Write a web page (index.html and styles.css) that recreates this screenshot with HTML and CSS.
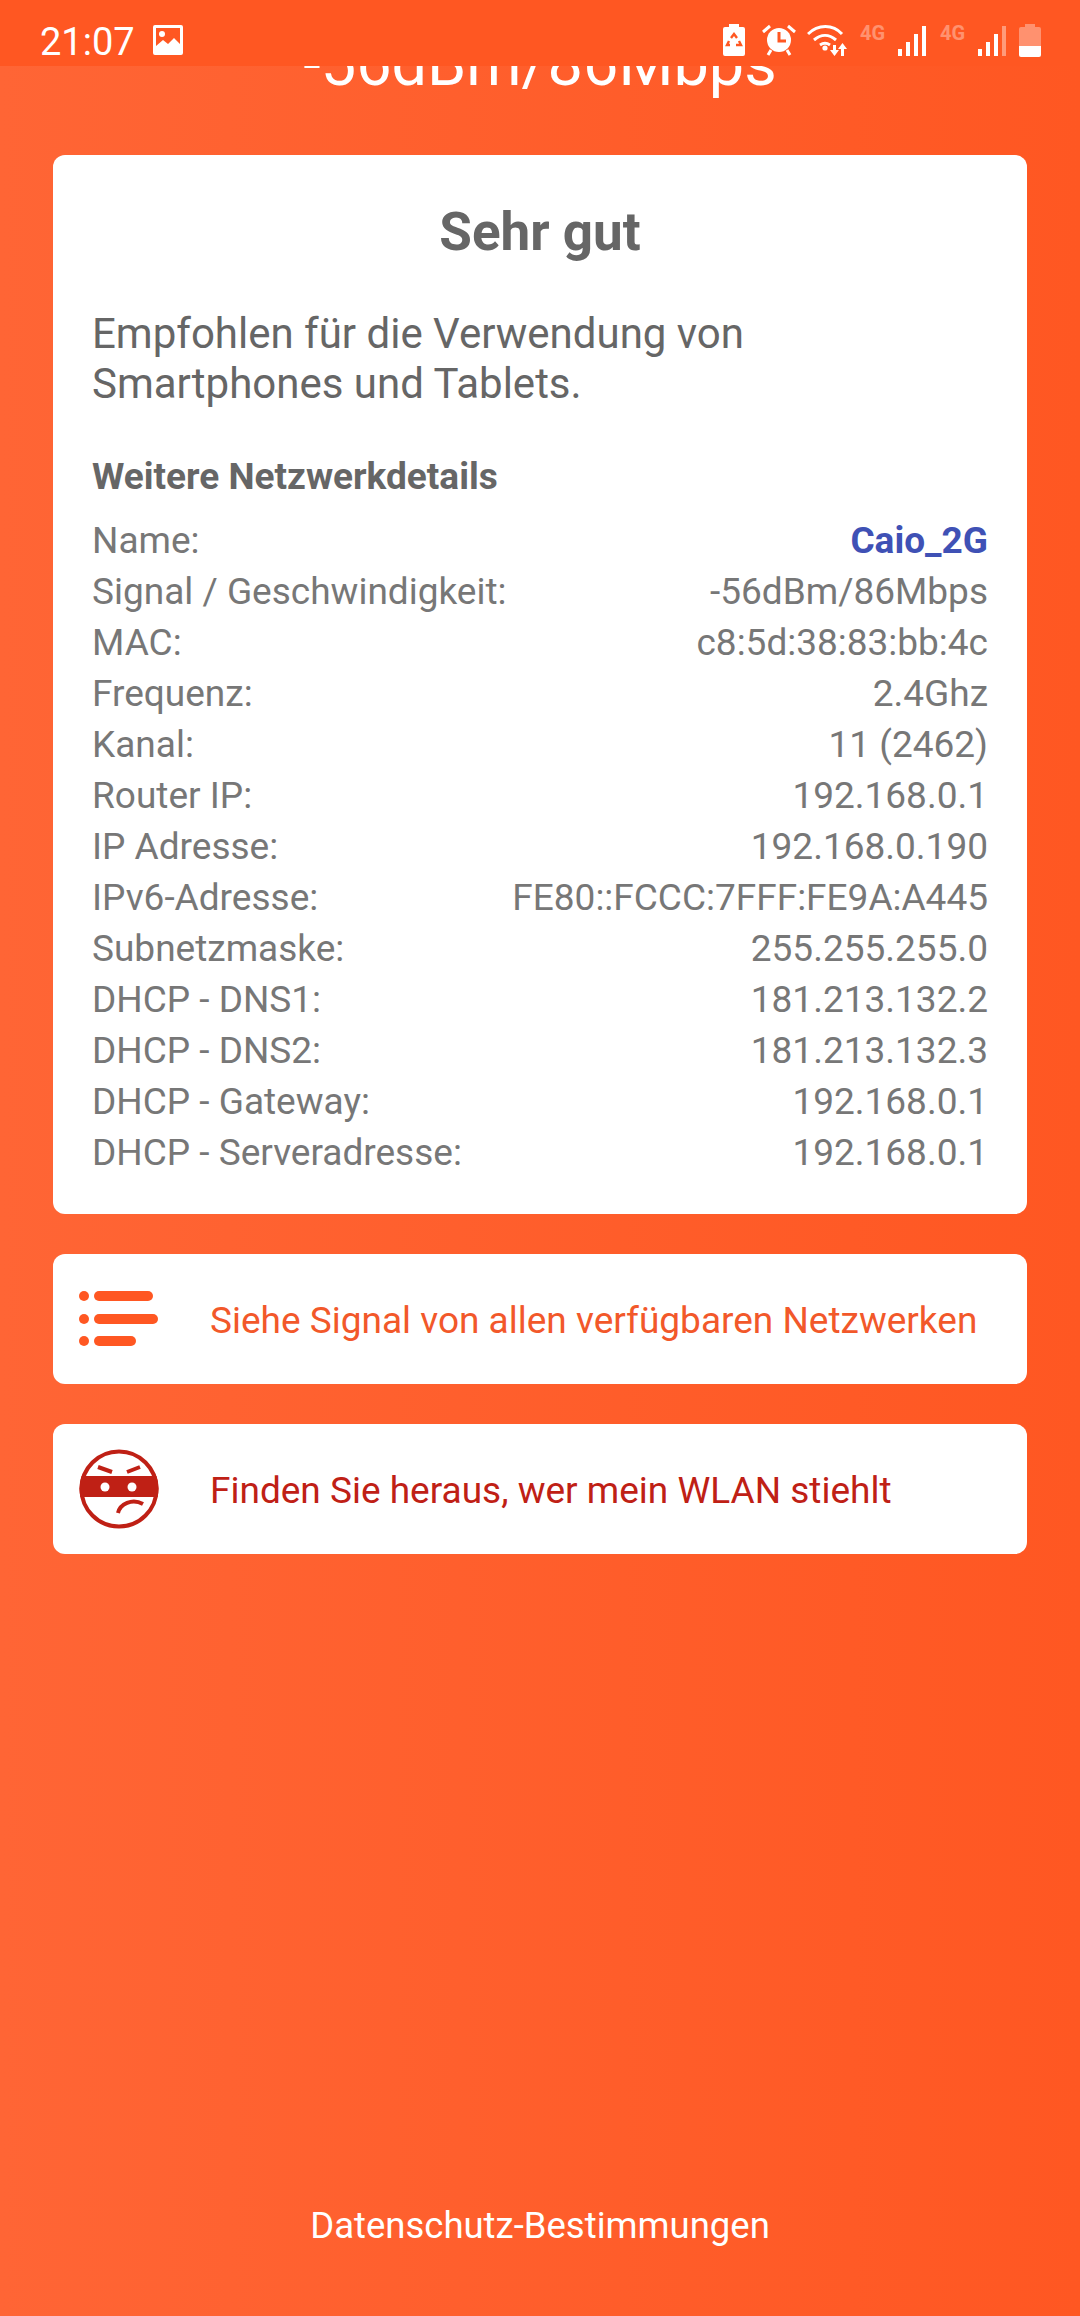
FILE: index.html
```html
<!DOCTYPE html>
<html>
<head>
<meta charset="utf-8">
<link rel="stylesheet" href="styles.css">
</head>
<body>
<div class="status">
	<div class="status-left">
		<span class="time">21:07</span>
		<svg width="32" height="32" viewBox="0 0 32 32">
			<path fill="#fff" fill-rule="evenodd" d="M3 1h26a2 2 0 0 1 2 2v26a2 2 0 0 1-2 2H3a2 2 0 0 1-2-2V3a2 2 0 0 1 2-2zM4 4v18l7-6 5 4 6-6 6 6V4z"/>
			<circle cx="10" cy="10" r="3" fill="#fff"/>
		</svg>
	</div>
	<div class="status-right">
		<svg width="24" height="32" viewBox="0 0 24 32">
			<path fill="#fff" d="M7 0h10v3h4a2 2 0 0 1 2 2v25a2 2 0 0 1-2 2H3a2 2 0 0 1-2-2V5a2 2 0 0 1 2-2h4z"/>
			<path fill="none" stroke="#ff5722" stroke-width="2.4" d="M9 14l3-4 3 4M17 17l2 4h-5M8 21H5l2-4"/>
		</svg>
		<svg class="alarm" width="34" height="32" viewBox="0 0 34 32">
			<circle cx="17" cy="16" r="12" fill="#fff"/>
			<path fill="none" stroke="#ff5722" stroke-width="3" d="M17 8v9h7"/>
			<path fill="none" stroke="#fff" stroke-width="3" d="M1 8l7-6M33 8l-7-6M9 26l-3 5M25 26l3 5"/>
		</svg>
		<svg class="wifi" width="42" height="32" viewBox="0 0 42 32">
			<path fill="none" stroke="#fff" stroke-width="3" d="M1 10c10-10 25-10 34 0M7 16c7-6 15-6 22 0M13 21c3-2 7-2 10 0"/>
			<circle cx="18" cy="24" r="2.6" fill="#fff"/>
			<path fill="#fff" d="M26 21h3v5h3l-4.500 6-4.500-6h3zM37 32h-3v-7h-3l4.500-6 4.500 6h-3z"/>
		</svg>
		<span class="net">4G</span>
		<svg class="bars" width="28" height="30" viewBox="0 0 28 30">
			<rect x="0" y="23" width="4" height="7" fill="#fff"/>
			<rect x="8" y="16" width="4" height="14" fill="#fff"/>
			<rect x="16" y="8" width="4" height="22" fill="#fff"/>
			<rect x="24" y="0" width="4" height="30" fill="#fff"/>
		</svg>
		<span class="net">4G</span>
		<svg class="bars" width="28" height="30" viewBox="0 0 28 30">
			<rect x="0" y="23" width="4" height="7" fill="#fff"/>
			<rect x="8" y="16" width="4" height="14" fill="#fff"/>
			<rect x="16" y="8" width="4" height="22" fill="#fff"/>
			<rect x="24" y="0" width="4" height="30" fill="#fff" fill-opacity="0.4"/>
		</svg>
		<svg class="batt" width="22" height="33" viewBox="0 0 22 33">
			<path fill="#fff" fill-opacity="0.35" d="M6 0h10v3h4a2 2 0 0 1 2 2v18H0V5a2 2 0 0 1 2-2h4z"/>
			<path fill="#fff" d="M0 22h22v9a2 2 0 0 1-2 2H2a2 2 0 0 1-2-2z"/>
		</svg>
	</div>
</div>

<div class="page">
	<div class="speed">-56dBm/86Mbps</div>

	<div class="card info">
		<h1>Sehr gut</h1>
		<p class="desc">Empfohlen für die Verwendung von Smartphones und Tablets.</p>
		<h2>Weitere Netzwerkdetails</h2>
		<div class="rows">
			<div class="row"><span>Name:</span><b>Caio_2G</b></div>
			<div class="row"><span>Signal / Geschwindigkeit:</span><span>-56dBm/86Mbps</span></div>
			<div class="row"><span>MAC:</span><span>c8:5d:38:83:bb:4c</span></div>
			<div class="row"><span>Frequenz:</span><span>2.4Ghz</span></div>
			<div class="row"><span>Kanal:</span><span>11 (2462)</span></div>
			<div class="row"><span>Router IP:</span><span>192.168.0.1</span></div>
			<div class="row"><span>IP Adresse:</span><span>192.168.0.190</span></div>
			<div class="row"><span>IPv6-Adresse:</span><span>FE80::FCCC:7FFF:FE9A:A445</span></div>
			<div class="row"><span>Subnetzmaske:</span><span>255.255.255.0</span></div>
			<div class="row"><span>DHCP - DNS1:</span><span>181.213.132.2</span></div>
			<div class="row"><span>DHCP - DNS2:</span><span>181.213.132.3</span></div>
			<div class="row"><span>DHCP - Gateway:</span><span>192.168.0.1</span></div>
			<div class="row"><span>DHCP - Serveradresse:</span><span>192.168.0.1</span></div>
		</div>
	</div>

	<div class="card action orange">
		<svg width="80" height="56" viewBox="0 0 80 56">
			<circle cx="5" cy="5" r="5" fill="#ff5722"/>
			<circle cx="5" cy="28" r="5" fill="#ff5722"/>
			<circle cx="5" cy="50" r="5" fill="#ff5722"/>
			<rect x="15" y="0" width="59" height="10" rx="5" fill="#ff5722"/>
			<rect x="15" y="23" width="64" height="10" rx="5" fill="#ff5722"/>
			<rect x="15" y="45" width="42" height="10" rx="5" fill="#ff5722"/>
		</svg>
		<span>Siehe Signal von allen verfügbaren Netzwerken</span>
	</div>

	<div class="card action red">
		<svg width="80" height="80" viewBox="0 0 80 80">
			<circle cx="40" cy="40" r="37.500" fill="#fff" stroke="#bf2015" stroke-width="4"/>
			<path fill="#bf2015" d="M2.500 27H77.500A39.500 39.500 0 0 1 78.600 48H1.400A39.500 39.500 0 0 1 2.500 27z"/>
			<circle cx="26" cy="38" r="4.500" fill="#fff"/>
			<circle cx="53" cy="38" r="4.500" fill="#fff"/>
			<path fill="none" stroke="#bf2015" stroke-width="4" d="M19 18l14 5M61 18l-13 5M39 64c2-9 14-15 25-9"/>
		</svg>
		<span>Finden Sie heraus, wer mein WLAN stiehlt</span>
	</div>

	<div class="spacer"></div>
	<div class="privacy">Datenschutz-Bestimmungen</div>
</div>
</body>
</html>
```
FILE: styles.css
```css
html, body
{
	margin: 0;
	height: 100%;
}
body
{
	width: 1080px;
	height: 2316px;
	overflow: hidden;
	position: relative;
	font-family: Roboto, sans-serif;
	background: linear-gradient(90deg, #ff6535, #ff5722);
}
.status
{
	position: absolute;
	z-index: 2;
	top: 0;
	left: 0;
	width: 1080px;
	height: 66px;
	box-sizing: border-box;
	padding: 22px 39px 0 40px;
	background: #ff5722;
	display: flex;
	justify-content: space-between;
	align-items: flex-start;
	color: #fff;
}
.status svg
{
	display: block;
}
.status-left
{
	display: flex;
	align-items: flex-start;
	gap: 17px;
}
.status-left svg
{
	margin-top: 2px;
}
.time
{
	font-size: 38px;
	line-height: 40px;
}
.status-right
{
	display: flex;
	align-items: flex-start;
	padding-top: 2px;
}
.alarm
{
	margin-left: 16px;
}
.wifi
{
	margin-left: 11px;
}
.net
{
	width: 23px;
	font-size: 20px;
	font-weight: bold;
	line-height: 20px;
	opacity: 0.35;
	margin: -1px 15px 0 11px;
}
.bars
{
	margin-top: 2px;
}
.bars + .net
{
	margin-left: 14px;
}
.batt
{
	margin-left: 13px;
}
.page
{
	height: 100%;
	display: flex;
	flex-direction: column;
	padding: 0 53px;
	box-sizing: border-box;
}
.speed
{
	margin-top: 26px;
	font-size: 63px;
	line-height: 75px;
	text-align: center;
	color: #fff;
}
.card
{
	background: #fff;
	border-radius: 12px;
}
.info
{
	margin-top: 54px;
	height: 1059px;
	box-sizing: border-box;
	padding: 46px 39px 0;
	color: #666;
}
h1
{
	margin: 0;
	font-size: 53px;
	line-height: 62px;
	font-weight: bold;
	text-align: center;
}
.desc
{
	margin: 46px 0 0;
	max-width: 800px;
	font-size: 42px;
	line-height: 50px;
}
h2
{
	margin: 46px 0 0;
	font-size: 37px;
	line-height: 44px;
	font-weight: bold;
}
.rows
{
	margin-top: 16px;
	font-size: 37px;
	line-height: 51px;
}
.row
{
	display: flex;
	justify-content: space-between;
	color: #777;
}
.row b
{
	color: #3f51b5;
}
.action
{
	margin-top: 40px;
	height: 130px;
	display: flex;
	align-items: center;
	padding-left: 26px;
	font-size: 37px;
}
.action svg
{
	flex: none;
	margin-right: 51px;
}
.action span
{
	padding-top: 2px;
}
.orange
{
	color: #f2582a;
}
.red
{
	color: #bf2015;
}
.spacer
{
	flex: 1;
}
.privacy
{
	font-size: 36.5px;
	line-height: 44px;
	text-align: center;
	color: #fff;
	margin-bottom: 68px;
}
```
